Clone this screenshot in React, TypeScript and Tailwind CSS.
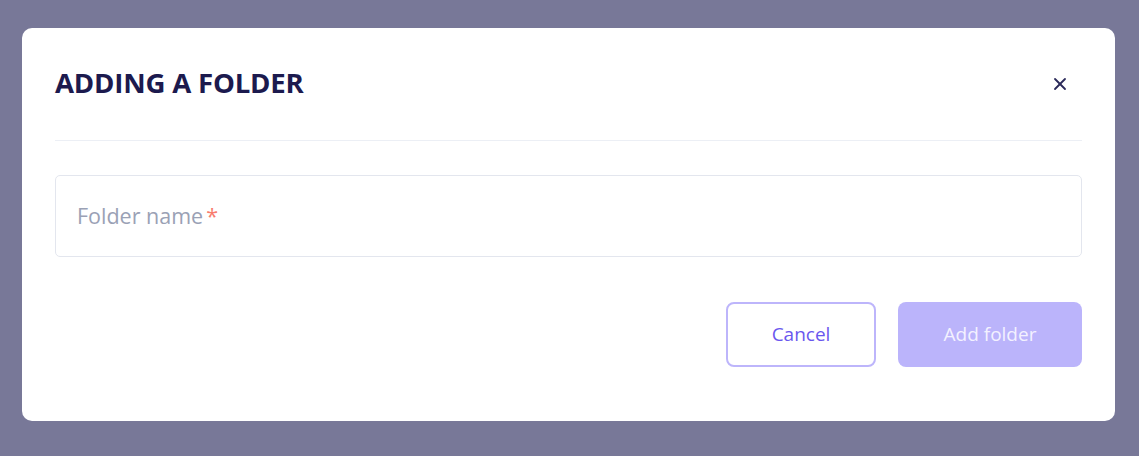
import { X } from "lucide-react"

export default function App() {
  return (
    <div
      className="w-[1139px] h-[456px] bg-[#787898] pt-[28px] pl-[22px]"
      style={{ fontFamily: '"Open Sans", sans-serif' }}
    >
      <div className="w-[1093px] h-[393px] bg-white rounded-[10px] px-[33px] flex flex-col">
        {/* Header */}
        <div className="flex items-center justify-between h-[113px] border-b border-[#eceff5]">
          <h2 className="text-[27.6px] font-bold text-[#1c1a4e] tracking-[-0.2px] leading-none pb-[3px]">
            ADDING A FOLDER
          </h2>
          <button className="w-[24px] h-[24px] mr-[10px] flex items-center justify-center text-[#2b2a5a]">
            <X size={20} strokeWidth={2.2} />
          </button>
        </div>

        {/* Input */}
        <div className="mt-[34px] h-[82px] border border-[#e3e6ee] rounded-[5px] flex items-center px-[21px]">
          <span className="text-[21.5px] text-[#9aa1b5]">
            Folder name
            <span className="text-[#f87c6e] ml-[3px]">*</span>
          </span>
        </div>

        {/* Actions */}
        <div className="flex justify-end gap-[22px] mt-[45px]">
          <button className="w-[150px] h-[65px] rounded-[8px] border-2 border-[#bdb5fb] text-[#6a57ee] text-[19px]">
            Cancel
          </button>
          <button className="w-[184px] h-[65px] rounded-[8px] bg-[#bbb4fb] text-[#f3f1ff] text-[19px]">
            Add folder
          </button>
        </div>
      </div>
    </div>
  )
}
